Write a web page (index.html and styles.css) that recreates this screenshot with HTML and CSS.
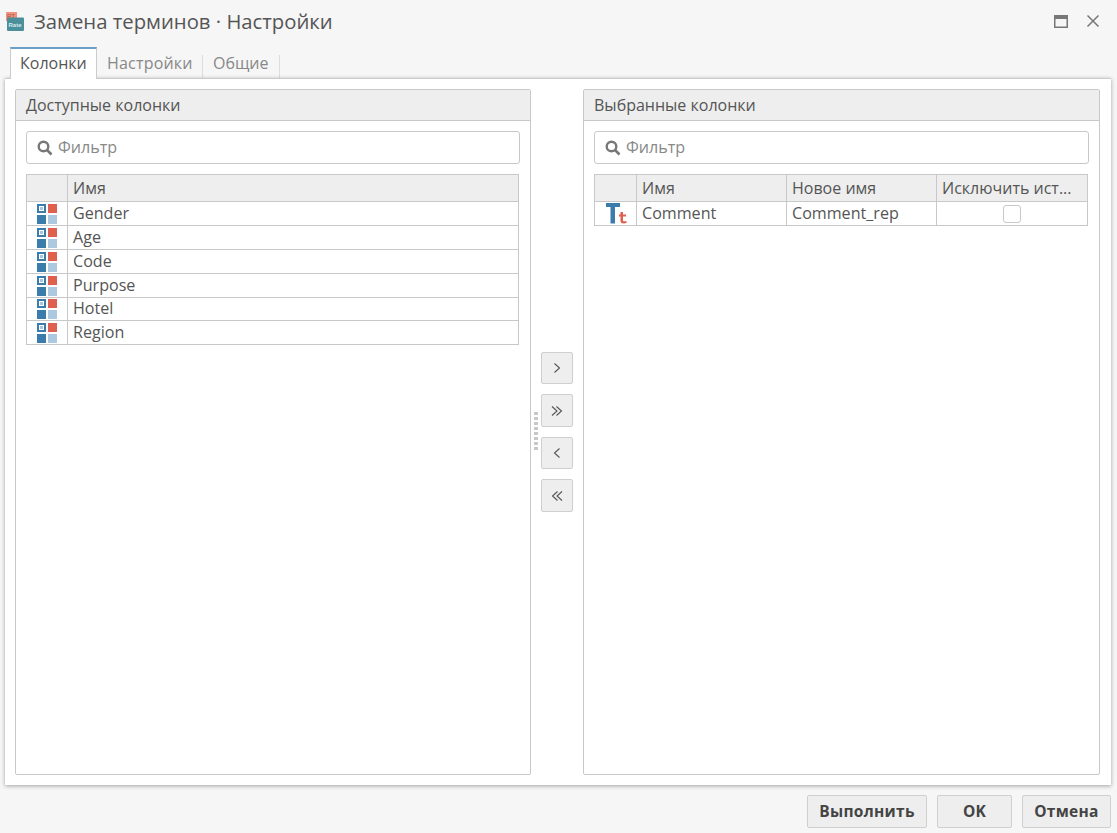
FILE: index.html
```html
<!DOCTYPE html>
<html lang="en">

<head>
    <meta charset="UTF-8">
    <meta name="viewport" content="width=device-width, initial-scale=1.0">
    <title>Замена терминов · Настройки</title>
    <link rel="stylesheet" href="styles.css">
</head>

<body>
    <div class="dialog">
        <!-- Title bar -->
        <div class="titlebar">
            <svg class="app-icon" width="19" height="19" viewBox="0 0 19 19">
                <rect x="0" y="0" width="11" height="9" fill="#ec9480"/>
                <text x="1" y="6" class="app-rt">RT</text>
                <rect x="1" y="5.500" width="17" height="13.500" rx="1" fill="#4a8f9a"/>
                <text x="2.500" y="14.500" class="app-rate">Rate</text>
            </svg>
            <span class="title">Замена терминов · Настройки</span>
            <svg class="win-btn win-max" width="14" height="13" viewBox="0 0 14 13">
                <rect x="0" y="0" width="14" height="13" fill="#777"/>
                <rect x="1.500" y="4" width="11" height="7.500" fill="#f6f6f6"/>
            </svg>
            <svg class="win-btn win-close" width="14" height="14" viewBox="0 0 14 14">
                <path d="M1.500 1.500L12.500 12.500M12.500 1.500L1.500 12.500" stroke="#777" stroke-width="1.500" fill="none"/>
            </svg>
        </div>

        <!-- Tabs -->
        <div class="tabs">
            <div class="tab active">Колонки</div>
            <div class="tab">Настройки</div>
            <div class="tab">Общие</div>
        </div>

        <!-- Main panel -->
        <div class="main">
            <div class="panel panel-left">
                <div class="panel-head">Доступные колонки</div>
                <div class="filter">
                    <svg width="16" height="16" viewBox="0 0 16 16">
                        <circle cx="6.500" cy="6.500" r="4.800" stroke="#777" stroke-width="2.400" fill="none"/>
                        <path d="M10 10L14.500 14.500" stroke="#777" stroke-width="2.600"/>
                    </svg>
                    <span>Фильтр</span>
                </div>
                <table class="grid grid-left">
                    <thead>
                        <tr><th class="col-icon"></th><th>Имя</th></tr>
                    </thead>
                    <tbody id="left-rows"></tbody>
                </table>
            </div>

            <div class="mover">
                <div class="grip"></div>
                <button class="move-btn"><svg width="10" height="12" viewBox="0 0 10 12"><path d="M2.500 1.500L7.500 6L2.500 10.500" class="chev"/></svg></button>
                <button class="move-btn"><svg width="14" height="12" viewBox="0 0 14 12"><path d="M2 1.500L7 6L2 10.500M6.500 1.500L11.500 6L6.500 10.500" class="chev"/></svg></button>
                <button class="move-btn"><svg width="10" height="12" viewBox="0 0 10 12"><path d="M7.500 1.500L2.500 6L7.500 10.500" class="chev"/></svg></button>
                <button class="move-btn"><svg width="14" height="12" viewBox="0 0 14 12"><path d="M7.500 1.500L2.500 6L7.500 10.500M12 1.500L7 6L12 10.500" class="chev"/></svg></button>
            </div>

            <div class="panel">
                <div class="panel-head">Выбранные колонки</div>
                <div class="filter">
                    <svg width="16" height="16" viewBox="0 0 16 16">
                        <circle cx="6.500" cy="6.500" r="4.800" stroke="#777" stroke-width="2.400" fill="none"/>
                        <path d="M10 10L14.500 14.500" stroke="#777" stroke-width="2.600"/>
                    </svg>
                    <span>Фильтр</span>
                </div>
                <table class="grid">
                    <thead>
                        <tr>
                            <th class="col-icon"></th>
                            <th class="col-name">Имя</th>
                            <th class="col-new">Новое имя</th>
                            <th>Исключить ист...</th>
                        </tr>
                    </thead>
                    <tbody>
                        <tr>
                            <td class="cell-icon">
                                <svg width="22" height="21" viewBox="0 0 22 21">
                                    <path d="M1 0H15V4H10V20.500H5.500V4H1Z" fill="#3a7cab"/>
                                    <path d="M15.500 9H18V11.500H21V13.500H18V17.500C18 18.500 19.500 18.500 21.500 18V20C18.500 21 15.500 20.500 15.500 18V13.500H14V11.500H15.500Z" fill="#e0604f"/>
                                </svg>
                            </td>
                            <td>Comment</td>
                            <td>Comment_rep</td>
                            <td class="cell-check"><span class="checkbox"></span></td>
                        </tr>
                    </tbody>
                </table>
            </div>
        </div>

        <!-- Footer buttons -->
        <div class="footer">
            <button class="btn btn-run">Выполнить</button>
            <button class="btn btn-ok">OK</button>
            <button class="btn btn-cancel">Отмена</button>
        </div>
    </div>

    <script>
        // Fill the available columns list
        const columns = ['Gender', 'Age', 'Code', 'Purpose', 'Hotel', 'Region'];
        const leftRows = document.querySelector('#left-rows');

        columns.forEach(name => {
            const row = document.createElement('tr');
            row.innerHTML = `
                <td class="cell-icon">
                    <svg width="20" height="20" viewBox="0 0 20 20">
                        <rect x="0" y="0" width="9" height="9" fill="#3a7cab"/>
                        <rect x="2" y="2" width="5" height="5" fill="#fff"/>
                        <rect x="3" y="3" width="3" height="3" fill="#a9c6dc"/>
                        <rect x="11" y="0" width="9" height="9" fill="#e0604f"/>
                        <rect x="0" y="11" width="9" height="9" fill="#3a7cab"/>
                        <rect x="11" y="11" width="9" height="9" fill="#adc9df"/>
                    </svg>
                </td>
                <td>${name}</td>
            `;
            leftRows.appendChild(row);
        });
    </script>
</body>

</html>
```

FILE: styles.css
```css
/* Reset and box-sizing rules */

* {
    margin: 0;
    padding: 0;
    box-sizing: border-box;
}

body {
    font-family: 'Open Sans', 'Noto Sans', sans-serif;
    font-size: 16px;
    color: #555;
    background-color: #f6f6f6;
    overflow: hidden;
}

.dialog {
    display: flex;
    flex-direction: column;
    width: 1117px;
    height: 833px;
}

/* Title bar */

.titlebar {
    display: flex;
    align-items: center;
    height: 47px;
    padding: 0 17px 5px 6px;
    flex-shrink: 0;
}

.app-icon {
    margin-right: 9px;
}

.app-rt {
    font-family: 'Liberation Sans', sans-serif;
    font-size: 6px;
    fill: #b5523f;
}

.app-rate {
    font-family: 'Liberation Sans', sans-serif;
    font-size: 6px;
    font-weight: bold;
    fill: #d5eaee;
}

.title {
    font-size: 20.3px;
    color: #555;
    flex: 1;
}

.win-max {
    margin-right: 18px;
}

/* Tabs */

.tabs {
    display: flex;
    height: 31px;
    padding-left: 10px;
    flex-shrink: 0;
}

.tab {
    height: 23px;
    margin-top: 8px;
    padding: 0 10px;
    line-height: 16px;
    color: #888;
    border-right: 1px solid #ddd;
}

.tab.active {
    width: 87px;
    height: 32px;
    margin-top: 0;
    padding: 6px 9px 0;
    color: #555;
    background-color: #fff;
    border: 1px solid #ccc;
    border-top: 2px solid #6a9fc9;
    border-bottom: none;
    position: relative;
    z-index: 1;
}

.tab:nth-child(2) {
    width: 106px;
    letter-spacing: 0.2px;
}

.tab:nth-child(3) {
    width: 77px;
}

/* Main panel */

.main {
    display: flex;
    width: 1106px;
    height: 707px;
    margin-left: 5px;
    padding: 10px 11px 10px 10px;
    background-color: #fff;
    border-top: 1px solid #ccc;
    box-shadow: 0 1px 4px rgba(0, 0, 0, 0.35);
    flex-shrink: 0;
}

.panel {
    flex: 1;
    display: flex;
    flex-direction: column;
    border: 1px solid #c8c8c8;
    border-radius: 2px;
    padding: 0 10px;
}

.panel-left {
    flex: none;
    width: 516px;
}

.panel-head {
    height: 31px;
    margin: 0 -10px;
    padding: 2px 10px 0;
    line-height: 26px;
    background-color: #eeeeee;
    border-bottom: 1px solid #c8c8c8;
    flex-shrink: 0;
}

.filter {
    display: flex;
    align-items: center;
    gap: 5px;
    height: 33px;
    margin-top: 10px;
    padding: 0 0 2px 10px;
    border: 1px solid #c8c8c8;
    border-radius: 3px;
    color: #888;
    font-size: 16.1px;
    flex-shrink: 0;
}

.filter svg {
    margin-top: 2px;
}

/* Grids */

.grid {
    width: calc(100% - 1px);
    margin-top: 10px;
    border-collapse: collapse;
    table-layout: fixed;
}

.grid th {
    height: 27px;
    padding: 0 5px;
    text-align: left;
    font-weight: normal;
    background-color: #eeeeee;
    border: 1px solid #c8c8c8;
    white-space: nowrap;
    overflow: hidden;
}

.grid td {
    height: 24px;
    padding: 0 5px 2px;
    font-size: 16.1px;
    border: 1px solid #c8c8c8;
    white-space: nowrap;
    line-height: 20px;
}

.grid tr:nth-child(5) td {
    height: 23px;
}

.col-icon {
    width: 42px;
}

.grid-left .col-icon {
    width: 41px;
}

.col-name {
    width: 150px;
}

.col-new {
    width: 150px;
}

.grid td.cell-icon {
    padding: 0;
    text-align: center;
    line-height: 0;
}

.cell-icon svg {
    display: inline-block;
    vertical-align: middle;
}

.grid td.cell-check {
    padding: 0 5px;
    text-align: center;
    line-height: 0;
}

.checkbox {
    display: inline-block;
    width: 18px;
    height: 18px;
    border: 1px solid #c8c8c8;
    border-radius: 3px;
    background-color: #fff;
    vertical-align: middle;
}

/* Move buttons */

.mover {
    position: relative;
    display: flex;
    flex-direction: column;
    align-items: center;
    justify-content: center;
    gap: 10px;
    width: 52px;
    flex-shrink: 0;
    padding-bottom: 0.5px;
}

.grip {
    position: absolute;
    left: 3px;
    top: 323px;
    width: 4px;
    height: 38px;
    background-image: repeating-linear-gradient(#c8c8c8 0, #c8c8c8 3px, transparent 3px, transparent 5px);
}

.move-btn {
    display: flex;
    align-items: center;
    justify-content: center;
    width: 32px;
    height: 32.500px;
    background-color: #eeeeee;
    border: 1px solid #cfcfcf;
    border-radius: 2px;
}

.chev {
    fill: none;
    stroke: #555;
    stroke-width: 1.1;
}

/* Footer buttons */

.footer {
    display: flex;
    justify-content: flex-end;
    gap: 10px;
    padding: 10px 6px 0 0;
}

.btn {
    height: 33px;
    padding-bottom: 2px;
    font-family: 'Open Sans', 'Noto Sans', sans-serif;
    font-size: 15.500px;
    font-weight: bold;
    letter-spacing: 0.3px;
    color: #444;
    background-color: #eeeeee;
    border: 1px solid #cfcfcf;
    border-radius: 2px;
}

.btn-run {
    width: 120px;
}

.btn-ok {
    width: 75px;
}

.btn-cancel {
    width: 89px;
}
```
